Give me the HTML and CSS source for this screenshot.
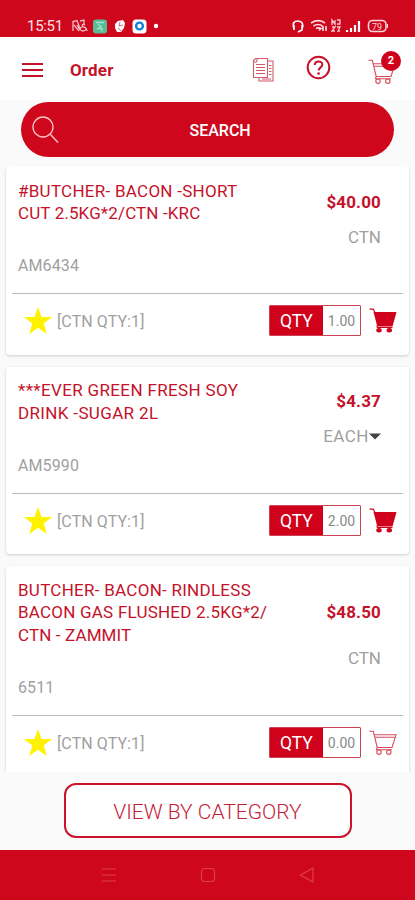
FILE: index.html
```html
<!DOCTYPE html>
<html lang="en">
<head>
<meta charset="utf-8">
<title>Order</title>
<link rel="stylesheet" href="styles.css">
</head>
<body>
<svg class="defs" width="0" height="0">
  <symbol id="star" viewBox="0 0 28 27"><path fill="#fff200" d="M14 0l3.6 9.9H28l-8.3 6.500L22.800 27 14 20.800 5.200 27l3.100-10.600L0 9.900h10.400z"/></symbol>
  <symbol id="cart-full" viewBox="0 0 28 25"><path fill="none" stroke="#d0021b" stroke-width="1.200" d="M.5 1.200h3.800l2 4"/><path fill="#d0021b" d="M4.500 4H27.500L23.500 18.500H8.300z"/><path fill="none" stroke="#d0021b" d="M8 17.500v2h15.500"/><ellipse cx="10" cy="22.300" rx="2.700" ry="2.200" fill="#d0021b"/><ellipse cx="20.300" cy="22.300" rx="2.700" ry="2.200" fill="#d0021b"/></symbol>
  <symbol id="cart-empty" viewBox="0 0 28 25"><g fill="none" stroke="#d44a5b" stroke-width="1.100"><path d="M.5 1.200h3.800L8.200 17.500M5 4.500l22 .3-4 12.700H8.200M5.500 7l20.500.2M8.200 17.500l-.7 2.200h15.500"/><circle cx="10" cy="22.200" r="2.200"/><circle cx="19.800" cy="22.200" r="2.200"/></g></symbol>
</svg>
<div class="status">
  <span class="clock">15:51</span>
  <svg class="st-left" width="90" height="16" viewBox="0 0 90 16">
    <g fill="none" stroke="#f6b9c0" stroke-width="1.300"><path d="M1 13V3.500l4-1 3 8M2 7l5 6M5 7l3 5M8 3l4-1v4M13 7c-3-2-4 1-1 2s2 4-1 4-4-3-1-4 5 2 5 4"/></g>
    <rect x="21" y="1.500" width="14" height="14" rx="3" fill="#57bd94"/><path d="M24 4.500h8M26 6.500l3 2-3 2h4v3" fill="none" stroke="#a5e2ca" stroke-width="1.300"/>
    <path d="M43 6l3-3 5-1 2 3-1 5-3 4h-4l-2-4z" fill="#fff"/><path d="M48 4l-1 4 4-1m-5 3 3 3" stroke="#df6572" fill="none"/>
    <rect x="60.500" y="1.500" width="14" height="14" rx="3.500" fill="#fff"/><circle cx="67.500" cy="8" r="3.400" fill="none" stroke="#1681d2" stroke-width="2.400"/>
    <circle cx="84" cy="8" r="2.200" fill="#fff"/>
  </svg>
  <svg class="st-right" width="100" height="16" viewBox="0 0 100 16">
    <g fill="none" stroke="#fff" stroke-width="1.600"><path d="M3 11C1 5 3 3 7 3s6 3 4 8M3 7v5M11 7v5l-4 2"/><path d="M20 5c5-3 10-3 14 0M22.500 8c3-2 6-2 9 0M25 10.500c2-1 3-1 5 0l-2 2M32 8v5m3-5v5" stroke="#ffe0e3"/></g>
    <path d="M41 7V2l3 4V2m2 0h3v4h-3M41 9h3l-3 4h3m2-4h3l-2 4h2" fill="none" stroke="#f9cbd0" stroke-width="1.300"/>
    <path d="M56 12v2m4-4v4m4-7v7m4-11v11" stroke="#fff" stroke-width="2.200"/>
    <rect x="77.500" y="2.500" width="17.500" height="11" rx="4" fill="none" stroke="#fbd5d9" stroke-width="1.600"/><path d="M96.500 6v4" stroke="#fbd5d9"/>
    <text x="81" y="11.500" class="batt">79</text>
  </svg>
</div>
<header class="header">
  <svg class="burger" width="21" height="16" viewBox="0 0 21 16"><path d="M0 2h21M0 8h21M0 14h21" stroke="#c3122a" stroke-width="2"/></svg>
  <h1 class="heading">Order</h1>
  <svg class="docs" width="23" height="26" viewBox="0 0 23 26"><g fill="none" stroke="#d0596a" stroke-width="1.100"><path d="M3.500 1.500h12v19h-14v-17zM1.500 5h3l1-3.500M15.500 4H21v20H7v-3.500M4 7.500h9M4 10.500h9M4 13.500h9M4 16.500h9M17 8.500h2.500M17 11.500h2.500M17 14.500h2.500M17 17.500h2.500M10 22h9"/></g></svg>
  <svg class="help" width="25" height="25" viewBox="0 0 25 25"><circle cx="12.500" cy="12.500" r="10.800" fill="none" stroke="#c8102a" stroke-width="2"/><path d="M8.800 10c0-5 7.600-4.500 7.600-.5 0 2.800-3.700 3-3.700 6" fill="none" stroke="#c8102a" stroke-width="2"/><circle cx="12.600" cy="18.500" r="1.300" fill="#c8102a"/></svg>
  <div class="basket"><svg width="28" height="25"><use href="#cart-empty"/></svg><span class="badge">2</span></div>
</header>
<main class="main">
  <div class="search">
    <svg class="glass" width="27" height="28" viewBox="0 0 27 28"><g fill="none" stroke="#ffc4ca" stroke-width="1.300"><circle cx="11" cy="11" r="10"/><path d="M18.500 18.500l7.500 8"/></g></svg>
    <span>SEARCH</span>
  </div>
  <div class="list">
    <article class="card">
      <div class="info">
        <h2 class="name">#BUTCHER- BACON -SHORT<br><span class="snug">CUT 2.5KG*2/CTN -KRC</span></h2>
        <span class="price">$40.00</span><span class="unit">CTN</span><span class="code">AM6434</span>
      </div>
      <div class="actions">
        <svg class="star" width="28" height="27"><use href="#star"/></svg><span class="pack">[CTN QTY:1]</span>
        <div class="qty"><b>QTY</b><span>1.00</span></div><svg width="28" height="25"><use href="#cart-full"/></svg>
      </div>
    </article>
    <article class="card">
      <div class="info">
        <h2 class="name"><span class="wide">***EVER GREEN FRESH SOY</span><br><span class="wide">DRINK -SUGAR 2L</span></h2>
        <span class="price">$4.37</span><span class="unit select">EACH<svg width="12" height="7" viewBox="0 0 12 7"><path d="M0 .5h12L6 6.500z" fill="#444"/></svg></span><span class="code">AM5990</span>
      </div>
      <div class="actions">
        <svg class="star" width="28" height="27"><use href="#star"/></svg><span class="pack">[CTN QTY:1]</span>
        <div class="qty"><b>QTY</b><span>2.00</span></div><svg width="28" height="25"><use href="#cart-full"/></svg>
      </div>
    </article>
    <article class="card">
      <div class="info">
        <h2 class="name">BUTCHER- BACON- RINDLESS<br><span class="flush">BACON GAS FLUSHED 2.5KG*2/</span><br><span class="snug">CTN - ZAMMIT</span></h2>
        <span class="price">$48.50</span><span class="unit">CTN</span><span class="code">6511</span>
      </div>
      <div class="actions">
        <svg class="star" width="28" height="27"><use href="#star"/></svg><span class="pack">[CTN QTY:1]</span>
        <div class="qty"><b>QTY</b><span>0.00</span></div><svg width="28" height="25"><use href="#cart-empty"/></svg>
      </div>
    </article>
  </div>
  <div class="footer"><div class="category">VIEW BY CATEGORY</div></div>
</main>
<nav class="nav">
  <svg width="16" height="16" viewBox="0 0 16 16"><path d="M1 2h14M1 8h14M1 14h14"/></svg>
  <svg width="16" height="16" viewBox="0 0 16 16"><rect x="1.500" y="1.500" width="13" height="13" rx="3"/></svg>
  <svg width="16" height="16" viewBox="0 0 16 16"><path d="M14 1v14L1.500 8z"/></svg>
</nav>
</body>
</html>
```

FILE: styles.css
```css
* { box-sizing: border-box; }
body {
  margin: 0;
  width: 415px;
  height: 900px;
  overflow: hidden;
  display: flex;
  flex-direction: column;
  font-family: Roboto, "Liberation Sans", sans-serif;
  background: #fff;
}
svg { display: block; flex: none; }
.defs { position: absolute; }
.status {
  height: 37px;
  flex: none;
  background: #ce071c;
  display: flex;
  align-items: flex-start;
  padding: 18px 24px 0 27px;
}
.clock { width: 45px; font-size: 15px; line-height: 16px; color: #ffe3e6; letter-spacing: -.3px; }
.st-right { margin-left: auto; }
.batt { font-size: 9px; fill: #fbd5d9; }
.header {
  height: 63px;
  flex: none;
  display: flex;
  align-items: center;
  padding: 2px 19px 0 22px;
  color: #c4122a;
}
.heading { margin: 0 auto 0 27px; font-size: 17px; font-weight: 700; letter-spacing: .15px; }
.docs { margin-right: 31px; }
.help { margin: -4px 37px 0 0; }
.basket { position: relative; margin-top: 4px; }
.badge {
  position: absolute;
  left: 13px;
  top: -8px;
  width: 20px;
  height: 20px;
  border-radius: 50%;
  background: #d0021b;
  color: #fff;
  font-size: 11px;
  font-weight: 700;
  line-height: 20px;
  text-align: center;
}
.main { height: 750px; flex: none; background: #fafafa; display: flex; flex-direction: column; padding-top: 2px; }
.search {
  height: 55px;
  flex: none;
  margin: 0 21px 10px;
  border-radius: 28px;
  background: #ce071c;
  color: #fff;
  display: flex;
  align-items: center;
  font-size: 16px;
  font-weight: 500;
}
.search span { padding-top: 1px; }
.glass { margin: 0 130.500px 0 11px; }
.list {
  height: 605px;
  flex: none;
  overflow: hidden;
  padding: 0 6px;
  display: flex;
  flex-direction: column;
  gap: 12px;
}
.card { flex: none; background: #fff; border-radius: 4px; box-shadow: 0 1px 3px rgba(0, 0, 0, .18); padding: 12.500px 6px 0; }
.info {
  display: grid;
  grid-template-columns: 1fr auto;
  grid-template-rows: auto 24.500px 44px;
  padding: 0 22px 0 6px;
  font-size: 17px;
}
.name {
  margin: 0;
  font-size: 17px;
  font-weight: 400;
  line-height: 22.500px;
  letter-spacing: .27px;
  color: #c4122a;
  white-space: nowrap;
}
.snug { letter-spacing: .13px; }
.wide { letter-spacing: .35px; }
.flush { letter-spacing: .22px; }
.price { align-self: center; padding-bottom: 1px; text-align: right; font-weight: 700; letter-spacing: .15px; color: #c4122a; }
.unit { grid-column: 2; line-height: 24.500px; text-align: right; color: #a0a0a0; }
.select { display: flex; align-items: center; justify-content: flex-end; letter-spacing: .5px; }
.code { grid-column: 1 / 3; padding-top: 1px; line-height: 31px; font-size: 16px; letter-spacing: .1px; color: #a0a0a0; }
.actions {
  height: 61.500px;
  border-top: 1px solid #bbb;
  display: flex;
  align-items: center;
  padding: 0 6px 7px 12px;
}
.pack { margin: 0 auto 0 5px; padding-top: 2px; font-size: 16px; letter-spacing: .1px; color: #a0a0a0; }
.qty { width: 92px; height: 31px; border: 1px solid #cc4252; border-radius: 1px; display: flex; margin-right: 8px; text-align: center; }
.qty b { width: 53px; background: #d0021b; color: #fff; font-size: 17.500px; font-weight: 400; line-height: 30px; }
.qty span { flex: 1; font-size: 14px; line-height: 30px; color: #888; }
.footer { flex: 1; display: flex; justify-content: center; padding-top: 11px; }
.category {
  width: 288px;
  height: 55px;
  border: 2px solid #c8142b;
  border-radius: 12px;
  background: #fff;
  color: #c4213a;
  font-size: 21px;
  font-weight: 300;
  line-height: 54px;
  text-align: center;
}
.nav {
  height: 50px;
  flex: none;
  background: #ce071c;
  display: flex;
  align-items: center;
  justify-content: center;
  gap: 83px;
}
.nav svg { fill: none; stroke: #df3d4c; stroke-width: 1.200; }
```
